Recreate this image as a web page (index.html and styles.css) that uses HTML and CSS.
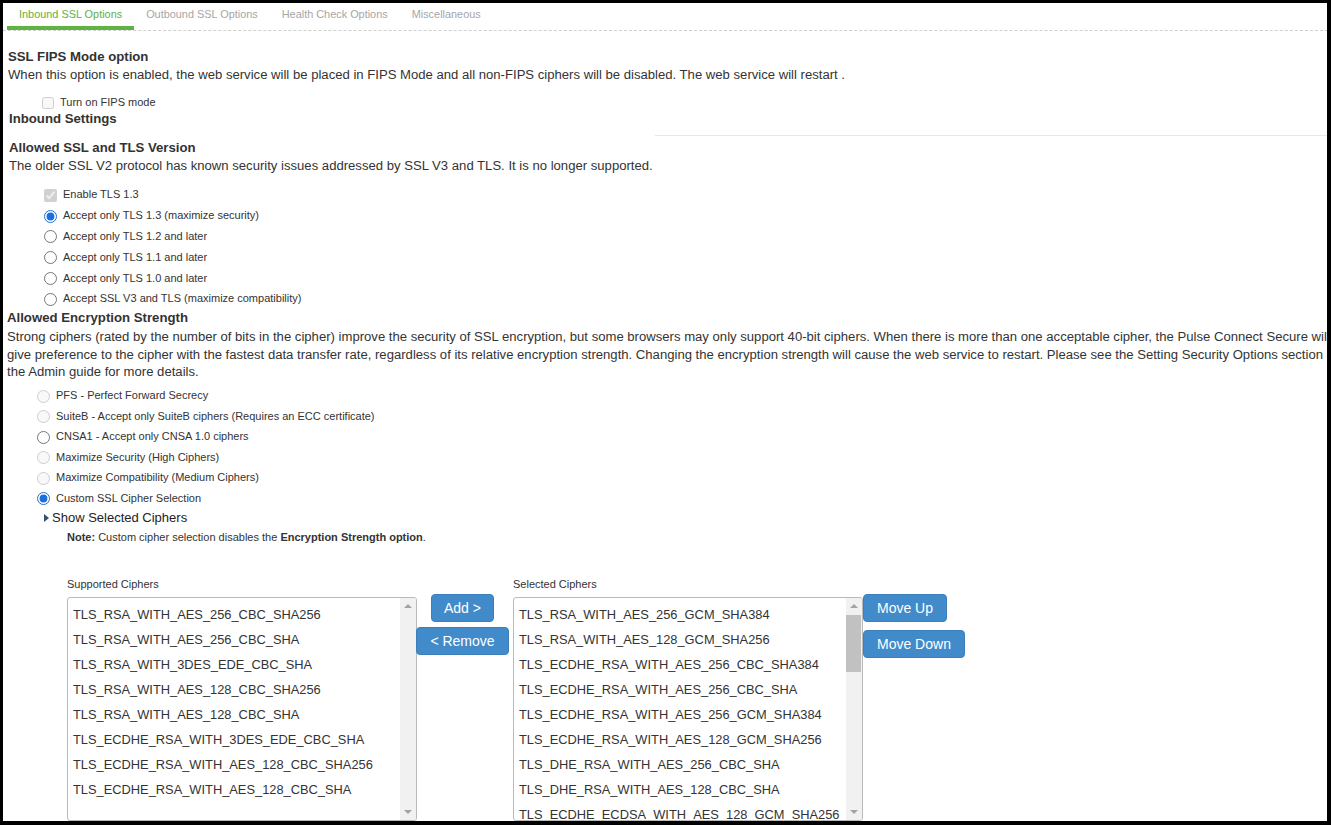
FILE: index.html
```html
<!DOCTYPE html>
<html lang="en">
<head>
<meta charset="utf-8">
<title>Inbound SSL Options</title>
<link rel="stylesheet" href="styles.css">
</head>
<body>
<div class="frame">
  <div class="page">
    <ul class="tabs">
      <li class="tab active">Inbound SSL Options</li>
      <li class="tab">Outbound SSL Options</li>
      <li class="tab">Health Check Options</li>
      <li class="tab">Miscellaneous</li>
    </ul>

    <section class="sec-fips">
      <h3 class="title title-first">SSL FIPS Mode option</h3>
      <p class="desc">When this option is enabled, the web service will be placed in FIPS Mode and all non-FIPS ciphers will be disabled. The web service will restart .</p>
      <label class="opt opt-fips"><input type="checkbox" disabled><span>Turn on FIPS mode</span></label>
      <h3 class="title title-inbound">Inbound Settings</h3>
    </section>

    <div class="rule"></div>

    <section class="sec-tls">
      <h3 class="title title-tls">Allowed SSL and TLS Version</h3>
      <p class="desc">The older SSL V2 protocol has known security issues addressed by SSL V3 and TLS. It is no longer supported.</p>
      <div class="opts opts-tls">
        <label class="opt"><input type="checkbox" checked disabled><span>Enable TLS 1.3</span></label>
        <label class="opt"><input type="radio" name="tls" checked><span>Accept only TLS 1.3 (maximize security)</span></label>
        <label class="opt"><input type="radio" name="tls"><span>Accept only TLS 1.2 and later</span></label>
        <label class="opt"><input type="radio" name="tls"><span>Accept only TLS 1.1 and later</span></label>
        <label class="opt"><input type="radio" name="tls"><span>Accept only TLS 1.0 and later</span></label>
        <label class="opt"><input type="radio" name="tls"><span>Accept SSL V3 and TLS (maximize compatibility)</span></label>
      </div>
    </section>

    <section class="sec-enc">
      <h3 class="title title-enc">Allowed Encryption Strength</h3>
      <p class="para">Strong ciphers (rated by the number of bits in the cipher) improve the security of SSL encryption, but some browsers may only support 40-bit ciphers. When there is more than one acceptable cipher, the Pulse Connect Secure will give preference to the cipher with the fastest data transfer rate, regardless of its relative encryption strength. Changing the encryption strength will cause the web service to restart. Please see the Setting Security Options section in the Admin guide for more details.</p>
      <div class="opts opts-enc">
        <label class="opt"><input type="radio" name="enc" disabled><span>PFS - Perfect Forward Secrecy</span></label>
        <label class="opt"><input type="radio" name="enc" disabled><span>SuiteB - Accept only SuiteB ciphers (Requires an ECC certificate)</span></label>
        <label class="opt"><input type="radio" name="enc"><span>CNSA1 - Accept only CNSA 1.0 ciphers</span></label>
        <label class="opt"><input type="radio" name="enc" disabled><span>Maximize Security (High Ciphers)</span></label>
        <label class="opt"><input type="radio" name="enc" disabled><span>Maximize Compatibility (Medium Ciphers)</span></label>
        <label class="opt"><input type="radio" name="enc" checked><span>Custom SSL Cipher Selection</span></label>
      </div>
      <div class="show"><span class="caret"></span><span>Show Selected Ciphers</span></div>
      <div class="note"><b>Note:</b> Custom cipher selection disables the <b>Encryption Strength option</b>.</div>

      <div class="ciphers">
        <div class="col">
          <div class="lbl">Supported Ciphers</div>
          <div class="listbox">
            <ul class="items">
              <li>TLS_RSA_WITH_AES_256_CBC_SHA256</li>
              <li>TLS_RSA_WITH_AES_256_CBC_SHA</li>
              <li>TLS_RSA_WITH_3DES_EDE_CBC_SHA</li>
              <li>TLS_RSA_WITH_AES_128_CBC_SHA256</li>
              <li>TLS_RSA_WITH_AES_128_CBC_SHA</li>
              <li>TLS_ECDHE_RSA_WITH_3DES_EDE_CBC_SHA</li>
              <li>TLS_ECDHE_RSA_WITH_AES_128_CBC_SHA256</li>
              <li>TLS_ECDHE_RSA_WITH_AES_128_CBC_SHA</li>
            </ul>
            <div class="sb">
              <span class="arr up"></span>
              <span class="track"></span>
              <span class="arr down"></span>
            </div>
          </div>
        </div>
        <div class="mid">
          <button class="btn">Add &gt;</button>
          <button class="btn">&lt; Remove</button>
        </div>
        <div class="col">
          <div class="lbl">Selected Ciphers</div>
          <div class="listbox">
            <ul class="items">
              <li>TLS_RSA_WITH_AES_256_GCM_SHA384</li>
              <li>TLS_RSA_WITH_AES_128_GCM_SHA256</li>
              <li>TLS_ECDHE_RSA_WITH_AES_256_CBC_SHA384</li>
              <li>TLS_ECDHE_RSA_WITH_AES_256_CBC_SHA</li>
              <li>TLS_ECDHE_RSA_WITH_AES_256_GCM_SHA384</li>
              <li>TLS_ECDHE_RSA_WITH_AES_128_GCM_SHA256</li>
              <li>TLS_DHE_RSA_WITH_AES_256_CBC_SHA</li>
              <li>TLS_DHE_RSA_WITH_AES_128_CBC_SHA</li>
              <li>TLS_ECDHE_ECDSA_WITH_AES_128_GCM_SHA256</li>
            </ul>
            <div class="sb">
              <span class="arr up"></span>
              <span class="track"><span class="thumb"></span></span>
              <span class="arr down"></span>
            </div>
          </div>
        </div>
        <div class="side">
          <button class="btn">Move Up</button>
          <button class="btn btn-down">Move Down</button>
        </div>
      </div>
    </section>
  </div>
</div>
</body>
</html>
```

FILE: styles.css
```css
html, body {
  margin: 0;
  padding: 0;
  background: #fff;
}

body {
  font-family: "Liberation Sans", Arial, sans-serif;
  color: #333;
}

.frame {
  width: 1331px;
  height: 825px;
  box-sizing: border-box;
  border-style: solid;
  border-color: #000;
  border-width: 3px 4px 4px 3px;
  overflow: hidden;
  background: #fff;
}

.page {
  width: 1400px;
}

/* Tabs */
.tabs {
  display: flex;
  margin: 0;
  padding: 0 0 0 4px;
  list-style: none;
  border-bottom: 1px dashed #cfcfcf;
}

.tab {
  padding: 4px 12px 5px;
  font-size: 10.9px;
  line-height: 14px;
  color: #a6a6a6;
  border-bottom: 4px solid transparent;
}

.tab.active {
  color: #62b043;
  border-bottom-color: #5fb344;
}

/* Headings & text */
.title {
  margin: 0;
  font-size: 13.2px;
  font-weight: bold;
  line-height: 18px;
  color: #333;
}

.desc {
  margin: 0;
  font-size: 13.12px;
  line-height: 18px;
  white-space: nowrap;
}

.sec-fips {
  padding-left: 5px;
}

.title-first {
  margin-top: 17px;
}

.title-inbound {
  padding-left: 1px;
}

.rule {
  margin: 7px 0 0 652px;
  border-top: 1px solid #e8e8e8;
}

.sec-tls {
  padding-left: 6px;
}

.title-tls {
  margin-top: 3px;
}

.sec-enc {
  padding-left: 4px;
}

.para {
  margin: 1.5px 0 0;
  width: 1330px;
  font-size: 13.12px;
  line-height: 17.5px;
}

/* Options */
.opt {
  display: flex;
  align-items: center;
  font-size: 11px;
  color: #333;
}

.opt input {
  margin: 2px 0 0;
  width: 13px;
  height: 13px;
  accent-color: #1a6fdb;
  flex: none;
}

.opt span {
  margin-left: 6px;
}

.opt-fips {
  margin: 10px 0 0 34px;
  height: 16px;
}

.opt-fips input {
  width: 12px;
  height: 12px;
}

.opt-fips span {
  margin-left: 6px;
}

.opts-tls {
  margin: 9px 0 0 35px;
}

.opts-tls .opt {
  height: 20.8px;
}

.opts-enc {
  margin: 4px 0 0 30px;
}

.opts-enc .opt {
  height: 20.5px;
}

.show {
  display: flex;
  align-items: center;
  margin: 1.7px 0 0 37px;
  font-size: 13px;
  line-height: 18px;
  color: #222;
}

.caret {
  width: 0;
  height: 0;
  border-top: 4px solid transparent;
  border-bottom: 4px solid transparent;
  border-left: 5px solid #34506e;
  margin-right: 3px;
}

.note {
  margin: 1.5px 0 0 60px;
  font-size: 11px;
  line-height: 16px;
  color: #333;
}

/* Cipher lists */
.ciphers {
  display: flex;
  align-items: flex-start;
  margin: 32px 0 0 60px;
}

.col {
  width: 350px;
  flex: none;
}

.lbl {
  font-size: 11px;
  line-height: 14px;
  color: #333;
}

.listbox {
  display: flex;
  margin-top: 6px;
  height: 224px;
  box-sizing: border-box;
  border: 1px solid #b9b9b9;
  border-radius: 3px;
  overflow: hidden;
  background: #fff;
}

.items {
  flex: 1;
  margin: 0;
  padding: 4px 0 0 5px;
  list-style: none;
  font-size: 12.85px;
  line-height: 25px;
  color: #333;
  white-space: nowrap;
  overflow: hidden;
}

.sb {
  width: 16px;
  flex: none;
  display: flex;
  flex-direction: column;
  align-items: center;
  background: #f1f1f1;
}

.arr {
  width: 0;
  height: 0;
  border-left: 4px solid transparent;
  border-right: 4px solid transparent;
  flex: none;
}

.arr.up {
  margin-top: 6px;
  border-bottom: 4px solid #a3a3a3;
}

.arr.down {
  margin-bottom: 6px;
  border-top: 4px solid #a3a3a3;
}

.track {
  flex: 1;
  align-self: stretch;
  display: flex;
  flex-direction: column;
  padding: 7px 1px 0 0;
}

.thumb {
  height: 57px;
  background: #c1c1c1;
}

.mid {
  width: 91px;
  flex: none;
  display: flex;
  flex-direction: column;
  align-items: center;
  gap: 5px;
  margin-top: 17px;
  margin-right: 5px;
}

.side {
  display: flex;
  flex-direction: column;
  align-items: flex-start;
  gap: 8px;
  margin-top: 17px;
}

.btn {
  height: 28px;
  padding: 0 13px;
  font-family: "Liberation Sans", Arial, sans-serif;
  font-size: 14px;
  line-height: 26px;
  color: #fff;
  background: #428bca;
  border: 1px solid #3b80bd;
  border-radius: 4px;
  white-space: nowrap;
}

.mid .btn:first-child {
  padding: 0 12px;
}
```
